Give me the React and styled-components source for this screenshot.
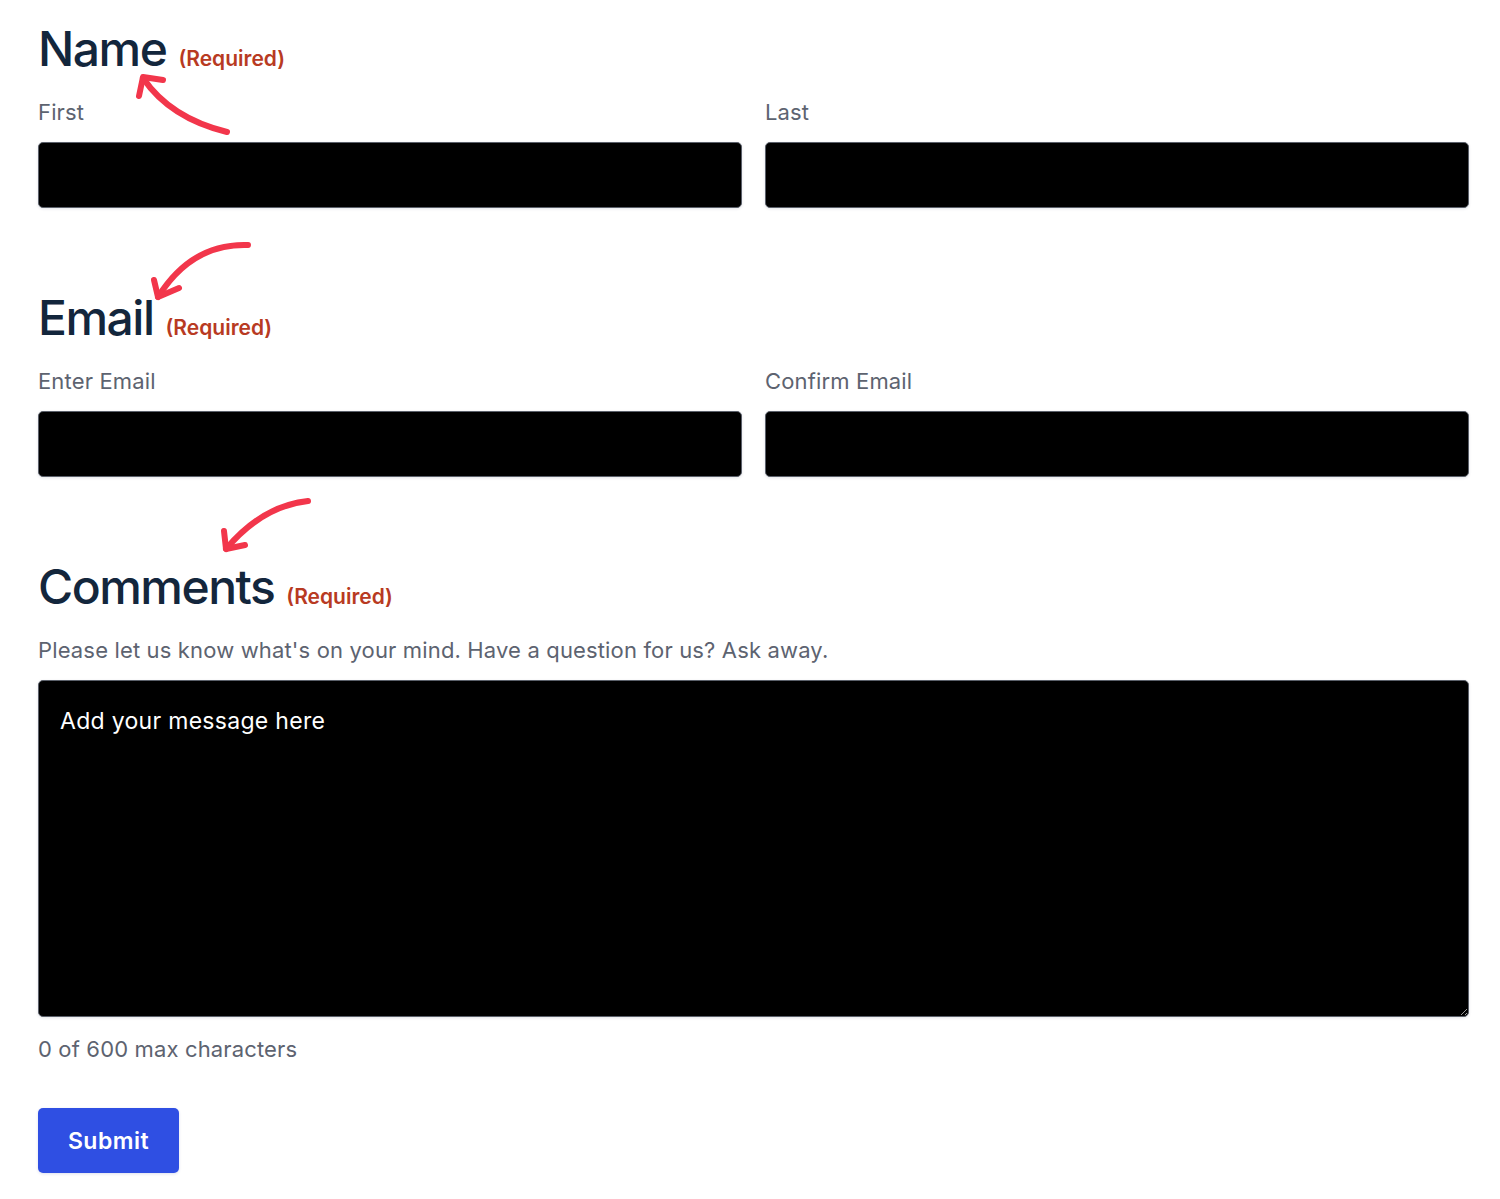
import React from 'react';
import styled, { createGlobalStyle } from 'styled-components';

const GlobalStyle = createGlobalStyle`
	html, body {
		margin: 0;
		padding: 0;
		background: #ffffff;
	}
	body {
		font-family: Inter, "Noto Sans", "Liberation Sans", sans-serif;
		-webkit-font-smoothing: antialiased;
	}
`;

const Arrow = ({ d, head }) => (
	<g>
		<path d={d} />
		<path d={head} />
	</g>
);

const App = () => {
	return (
		<Page>
			<GlobalStyle />
			<Form onSubmit={(e) => e.preventDefault()}>
				<Section>
					<Heading>
						<span>Name</span>
						<Required>(Required)</Required>
					</Heading>
					<Row>
						<Field>
							<Label>First</Label>
							<Input type="text" />
						</Field>
						<Field>
							<Label>Last</Label>
							<Input type="text" />
						</Field>
					</Row>
				</Section>

				<Section>
					<Heading>
						<span>Email</span>
						<Required>(Required)</Required>
					</Heading>
					<Row>
						<Field>
							<Label>Enter Email</Label>
							<Input type="email" />
						</Field>
						<Field>
							<Label>Confirm Email</Label>
							<Input type="email" />
						</Field>
					</Row>
				</Section>

				<Section>
					<Heading>
						<span>Comments</span>
						<Required>(Required)</Required>
					</Heading>
					<Label as="p">
						Please let us know what's on your mind. Have a question for us? Ask away.
					</Label>
					<TextArea placeholder="Add your message here" />
					<Counter>0 of 600 max characters</Counter>
				</Section>

				<SubmitButton type="submit">Submit</SubmitButton>
			</Form>

			{/* hand-drawn annotation arrows over the form */}
			<ArrowLayer viewBox="0 0 1500 1199" aria-hidden="true">
				<Arrow d="M227 132 Q170 118 143 78" head="M163 80 L143 77 L139 96" />
				<Arrow d="M248 245 Q192 243 158 297" head="M154 280 L158 297 L179 288" />
				<Arrow d="M308 501 Q262 506 226 549" head="M224 531 L226 549 L245 545" />
			</ArrowLayer>
		</Page>
	);
};

const Page = styled.div`
	position: relative;
	width: 1500px;
	min-height: 1199px;
	box-sizing: border-box;
	padding: 20px 31px 0 38px;
`;

const Form = styled.form`
	display: flex;
	flex-direction: column;
`;

const Section = styled.section`
	display: flex;
	flex-direction: column;
	margin-bottom: 81px;

	&:last-of-type {
		margin-bottom: 0;
	}
`;

const Heading = styled.h2`
	display: flex;
	align-items: baseline;
	gap: 12px;
	margin: 0 0 20px;
	font-size: 48px;
	line-height: 58px;
	font-weight: 500;
	letter-spacing: -1.5px;
	color: #13263c;
`;

const Required = styled.span`
	font-size: 21px;
	line-height: 1;
	font-weight: 600;
	letter-spacing: 0;
	color: #b83a22;
`;

const Row = styled.div`
	display: grid;
	grid-template-columns: 1fr 1fr;
	gap: 23px;
`;

const Field = styled.div`
	display: flex;
	flex-direction: column;
`;

const Label = styled.label`
	margin: 0 0 16px;
	font-size: 22px;
	line-height: 28px;
	letter-spacing: 0.15px;
	color: #5d6370;
`;

const Input = styled.input`
	height: 66px;
	box-sizing: border-box;
	background: #000000;
	border: 1px solid #5b606a;
	border-radius: 5px;
	box-shadow: 0 1px 3px rgba(30, 40, 70, 0.12);
	color: #ffffff;
	font: inherit;
	padding: 0 20px;
	outline: none;
`;

const TextArea = styled.textarea`
	height: 337px;
	box-sizing: border-box;
	background: #000000;
	border: 1px solid #5b606a;
	border-radius: 5px;
	box-shadow: 0 1px 3px rgba(30, 40, 70, 0.12);
	color: #ffffff;
	font-family: inherit;
	font-size: 23px;
	line-height: 33px;
	letter-spacing: 0.3px;
	padding: 24px 21px;
	outline: none;

	&::placeholder {
		color: #ffffff;
		opacity: 1;
	}
`;

const Counter = styled.p`
	margin: 18px 0 0;
	font-size: 22px;
	line-height: 28px;
	letter-spacing: 0.15px;
	color: #5d6370;
`;

const SubmitButton = styled.button`
	align-self: flex-start;
	margin-top: 45px;
	width: 141px;
	height: 65px;
	border: none;
	border-radius: 5px;
	background: #2f4fe3;
	box-shadow: 0 1px 3px rgba(30, 50, 140, 0.15);
	color: #ffffff;
	font-family: inherit;
	font-size: 23px;
	font-weight: 600;
	letter-spacing: 0.5px;
	cursor: pointer;
`;

const ArrowLayer = styled.svg`
	position: absolute;
	top: 0;
	left: 0;
	width: 1500px;
	height: 1199px;
	pointer-events: none;
	fill: none;
	stroke: #f2364b;
	stroke-width: 6;
	stroke-linecap: round;
	stroke-linejoin: round;
`;

export default App;
